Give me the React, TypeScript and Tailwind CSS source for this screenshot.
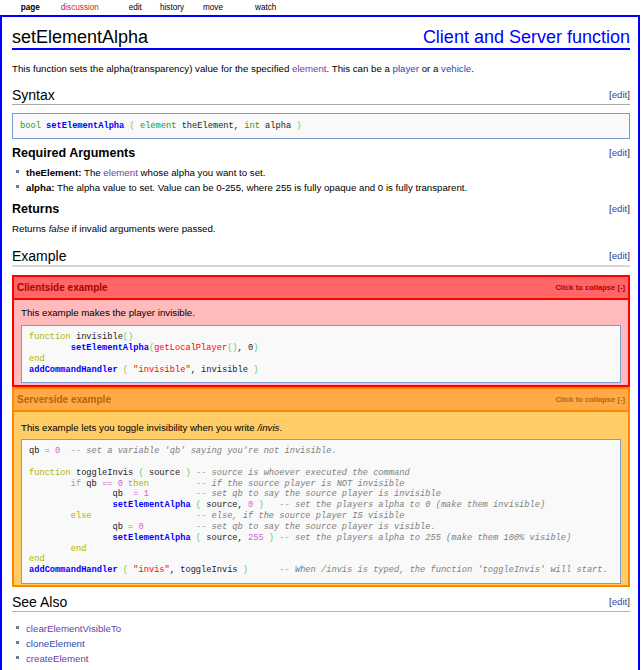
type Tok = [string, string?];

const K = 'text-[#b1b100]';
const B = 'text-[#66cc66]';
const N = 'text-[#cc66cc]';
const S = 'text-[#ff0000]';
const F = 'text-[#0000ff] font-bold';
const C = 'text-[#808080] italic';

const clientCode: Tok[][] = [
  [['function', K], [' invisible'], ['()', B]],
  [['        '], ['setElementAlpha', F], ['(', B], ['getLocalPlayer', S], ['()', B], [', 0'], [')', B]],
  [['end', K]],
  [['addCommandHandler', F], [' '], ['(', B], [' '], ['"invisible"', S], [', invisible '], [')', B]],
];

const serverCode: Tok[][] = [
  [['qb '], ['=', N], [' '], ['0', N], ['  '], ["-- set a variable 'qb' saying you're not invisible.", C]],
  [[' ']],
  [['function', K], [' toggleInvis '], ['(', B], [' source '], [')', B], [' '], ['-- source is whoever executed the command', C]],
  [['        '], ['if', K], [' qb '], ['==', N], [' '], ['0', N], [' '], ['then', K], ['         '], ['-- if the source player is NOT invisible', C]],
  [['                qb  '], ['=', N], [' '], ['1', N], ['         '], ['-- set qb to say the source player is invisible', C]],
  [['                '], ['setElementAlpha', F], [' '], ['(', B], [' source, '], ['0', N], [' '], [')', B], ['   '], ['-- set the players alpha to 0 (make them invisible)', C]],
  [['        '], ['else', K], ['                    '], ['-- else, if the source player IS visible', C]],
  [['                qb '], ['=', N], [' '], ['0', N], ['          '], ['-- set qb to say the source player is visible.', C]],
  [['                '], ['setElementAlpha', F], [' '], ['(', B], [' source, '], ['255', N], [' '], [')', B], [' '], ['-- set the players alpha to 255 (make them 100% visible)', C]],
  [['        '], ['end', K]],
  [['end', K]],
  [['addCommandHandler', F], [' '], ['(', B], [' '], ['"invis"', S], [', toggleInvis '], [')', B], ['      '], ["-- When /invis is typed, the function 'toggleInvis' will start.", C]],
];

function Code({ lines, className }: { lines: Tok[][]; className: string }) {
  return (
    <div className={`border border-[#7b9ccc] bg-[#f9f9f9] pl-[7px] font-['Liberation_Mono',monospace] text-[8.7px] leading-[10.85px] text-[#222] whitespace-pre ${className}`}>
      {lines.map((line, i) => (
        <div key={i}>
          {line.map(([t, c], j) => (
            <span key={j} className={c}>
              {t}
            </span>
          ))}
        </div>
      ))}
    </div>
  );
}

function Edit() {
  return (
    <span className="text-[9.7px] text-[#333] font-normal">
      [<span className="text-[#2a4ab8]">edit</span>]
    </span>
  );
}

function Bullet() {
  return <span className="inline-block w-[3px] h-[3px] bg-[#6a7f94] mr-[7px] ml-[4px] align-middle mb-[2px]" />;
}

export default function App() {
  return (
    <div className="w-[641px] h-[670px] overflow-hidden bg-white font-['Liberation_Sans',Arial,sans-serif] text-black">
      {/* tabs */}
      <div className="flex h-[15px] items-center pt-[2px] text-[8.2px] pl-[20.7px]">
        <span className="w-[40px] font-bold">page</span>
        <span className="w-[68px] text-[#cc2222]">discussion</span>
        <span className="w-[31.3px]">edit</span>
        <span className="w-[43px]">history</span>
        <span className="w-[52px]">move</span>
        <span>watch</span>
      </div>

      <div className="w-[640px] h-[700px] border-2 border-[#0000ff] pl-[10px] pr-[8px]">
        <div className="flex justify-between items-center pt-[9px] leading-[22px] text-[18px] border-b-2 border-[#0000ff]">
          <h1>setElementAlpha</h1>
          <span className="text-[#0000ff]">Client and Server function</span>
        </div>

        <p className="mt-[12px] text-[9.7px] leading-[14px]">
          This function sets the alpha(transparency) value for the specified{' '}
          <span className="text-[#6b3fa0]">element</span>. This can be a{' '}
          <span className="text-[#2a4ab8]">player</span> or a <span className="text-[#2a4ab8]">vehicle</span>.
        </p>

        <div className="mt-[10px] flex justify-between items-center leading-[18px] border-b border-[#aaaaaa]">
          <h2 className="text-[14px]">Syntax</h2>
          <Edit />
        </div>

        <Code
          className="mt-[8px] h-[26px] pt-[6.5px]"
          lines={[
            [
              ['bool', 'text-[#229922]'],
              [' '],
              ['setElementAlpha', F],
              [' '],
              ['(', B],
              [' '],
              ['element', 'text-[#229922]'],
              [' theElement, '],
              ['int', 'text-[#229922]'],
              [' alpha '],
              [')', B],
            ],
          ]}
        />

        <div className="mt-[6px] flex justify-between items-center leading-[16px]">
          <h3 className="text-[12.5px] font-bold">Required Arguments</h3>
          <Edit />
        </div>
        <ul className="mt-[3.5px] text-[9.7px] leading-[15px]">
          <li>
            <Bullet />
            <b>theElement:</b> The <span className="text-[#6b3fa0]">element</span> whose alpha you want to set.
          </li>
          <li>
            <Bullet />
            <b>alpha:</b> The alpha value to set. Value can be 0-255, where 255 is fully opaque and 0 is fully transparent.
          </li>
        </ul>

        <div className="mt-[6.5px] flex justify-between items-center leading-[16px]">
          <h3 className="text-[12.5px] font-bold">Returns</h3>
          <Edit />
        </div>
        <p className="mt-[5px] text-[9.7px] leading-[14px]">
          Returns <i>false</i> if invalid arguments were passed.
        </p>

        <div className="mt-[11px] flex justify-between items-center leading-[18px] border-b-2 border-[#d6d6d6]">
          <h2 className="text-[14px]">Example</h2>
          <Edit />
        </div>

        {/* clientside */}
        <div className="mt-[8px] border-2 border-[#ff0000]">
          <div className="h-[23px] flex items-center justify-between px-[3px] bg-[#ff6666] border-b-2 border-[#ff0000] font-bold text-[#b00000]">
            <span className="text-[10px]">Clientside example</span>
            <span className="text-[7.6px]">Click to collapse [-]</span>
          </div>
          <div className="bg-[#ffbbbb] px-[7px] pt-[6px] pb-[2px]">
            <p className="text-[9.7px] leading-[14px]">This example makes the player invisible.</p>
            <Code className="mt-[5px] h-[58px] pt-[6px]" lines={clientCode} />
          </div>
        </div>

        {/* serverside */}
        <div className="border-2 border-[#ff8800]">
          <div className="h-[23px] flex items-center justify-between px-[3px] bg-[#ffaa44] border-b-2 border-[#ff8800] font-bold text-[#b86410]">
            <span className="text-[10px]">Serverside example</span>
            <span className="text-[7.6px]">Click to collapse [-]</span>
          </div>
          <div className="bg-[#ffcc66] px-[7px] pt-[9px] pb-[1px]">
            <p className="text-[9.7px] leading-[14px]">
              This example lets you toggle invisibility when you write <i>/invis</i>.
            </p>
            <Code className="mt-[4px] h-[145px] pt-[6px]" lines={serverCode} />
          </div>
        </div>

        <div className="mt-[6px] flex justify-between items-center leading-[18px] border-b border-[#b0b0b0]">
          <h2 className="text-[14px]">See Also</h2>
          <Edit />
        </div>
        <ul className="mt-[8.5px] text-[9.7px] leading-[15px]">
          <li>
            <Bullet />
            <span className="text-[#6b3fa0]">clearElementVisibleTo</span>
          </li>
          <li>
            <Bullet />
            <span className="text-[#2a4ab8]">cloneElement</span>
          </li>
          <li>
            <Bullet />
            <span className="text-[#6b3fa0]">createElement</span>
          </li>
        </ul>
      </div>
    </div>
  );
}
